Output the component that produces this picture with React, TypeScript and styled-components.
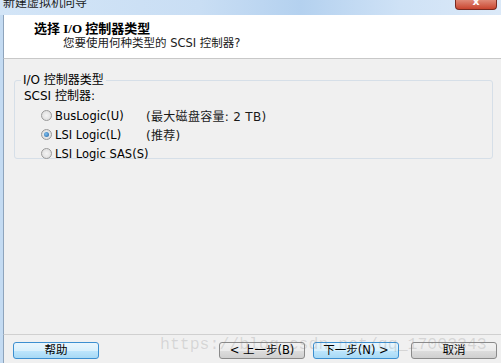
import styled, { createGlobalStyle } from "styled-components";

const GlobalStyle = createGlobalStyle`
   html, body {
      margin: 0;
      padding: 0;
      background: #f0f0f0;
   }
   #root {
      width: 501px;
      height: 363px;
      overflow: hidden;
   }
`

const cjk = `"DejaVu Sans", "Noto Sans CJK SC", sans-serif`

const StyledWindow = styled.div`
   position: relative;
   width: 501px;
   height: 363px;
   display: flex;
   flex-direction: column;
   box-sizing: border-box;
   border-left: 3px solid #c4dbf2;
   font-family: ${cjk};
   font-size: 12px;
   color: #000;
   background: #f0f0f0;
`

const StyledTitleBar = styled.div`
   height: 15px;
   display: flex;
   justify-content: space-between;
   align-items: flex-start;
   margin-left: -3px;
   background: linear-gradient(90deg, #d3e5f7 0%, #c9def4 40%, #b4d1ef 60%, #cfe2f6 80%, #dbe9f8 100%);
   overflow: hidden;
`

const StyledTitleText = styled.span`
   font-size: 12px;
   line-height: 12px;
   margin-top: -3px;
   padding-left: 3px;
   color: #1a1a1a;
`

const StyledClose = styled.div`
   width: 40px;
   height: 9px;
   margin-right: 4px;
   border: 1px solid #7a2a20;
   border-top: none;
   border-radius: 0 0 4px 4px;
   background: linear-gradient(#e08a78, #c9452f);
   color: #fff;
   font-size: 11px;
   line-height: 4px;
   text-align: center;
   font-weight: bold;
`

const StyledHeader = styled.div`
   height: 44px;
   background: #fff;
   border-left: 1px solid #8ea4bc;
   border-bottom: 1px solid #c8c8c8;
   box-sizing: border-box;
   padding: 6px 0 0 30px;
   display: flex;
   flex-direction: column;
`

const StyledHeaderTitle = styled.div`
   font-family: "Liberation Serif", "Noto Sans CJK SC", serif;
   font-weight: bold;
   font-size: 13px;
   line-height: 15px;
`

const StyledHeaderSub = styled.div`
   padding-left: 29px;
   font-size: 11.5px;
   line-height: 14px;
   color: #1a1a1a;
`

const StyledBody = styled.div`
   flex: 1;
   border-left: 1px solid #8ea4bc;
   padding: 15px 8px 0 10px;
`

const StyledGroup = styled.fieldset`
   margin: 0;
   height: 85px;
   box-sizing: border-box;
   border: 1px solid #d6dfe8;
   border-radius: 3px;
   padding: 0 0 0 9px;
`

const StyledLegend = styled.legend`
   padding: 0 2px;
   margin-left: -3px;
   font-size: 12px;
   line-height: 12px;
`

const StyledRowLabel = styled.div`
   height: 19px;
   line-height: 19px;
   margin-top: 1px;
`

const StyledOptions = styled.div`
   padding-left: 17px;
   display: flex;
   flex-direction: column;
`

const StyledOption = styled.label`
   height: 19px;
   display: grid;
   grid-template-columns: 105px auto;
   align-items: center;
   white-space: nowrap;
`

const StyledRadioWrap = styled.span`
   display: flex;
   align-items: center;
   gap: 3px;
   font-size: 11.5px;
`

const StyledRadio = styled.span<{ $checked?: boolean }>`
   flex-shrink: 0;
   width: 9px;
   height: 9px;
   border-radius: 50%;
   border: 1px solid #9a9a9a;
   background: radial-gradient(circle, #f4f4f4, #d8d8d8);
   display: flex;
   align-items: center;
   justify-content: center;
   &::after {
      content: "";
      display: ${(p) => (p.$checked ? "block" : "none")};
      width: 5px;
      height: 5px;
      border-radius: 50%;
      background: radial-gradient(circle at 40% 40%, #7fc0f0, #1f5f9f);
   }
`

const StyledNote = styled.span`
   color: #1a1a1a;
   letter-spacing: 0.3px;
`

const StyledFooter = styled.div`
   height: 29px;
   border-top: 1px solid #d0d0d0;
   border-left: 1px solid #8ea4bc;
   display: flex;
   align-items: flex-start;
   padding: 7px 0 0 9px;
   box-sizing: border-box;
   gap: 8px;
`

const StyledButton = styled.button<{ $focused?: boolean; $gap?: number }>`
   width: 86px;
   height: 17px;
   margin-left: ${(p) => p.$gap ?? 0}px;
   padding: 0;
   border-radius: 3px;
   border: 1px solid ${(p) => (p.$focused ? "#3c8fd0" : "#8a8a8a")};
   background: ${(p) =>
      p.$focused
         ? "linear-gradient(#eaf6fd 0%, #d9f0fc 50%, #bee6fd 51%, #a7d9f5 100%)"
         : "linear-gradient(#f2f2f2 0%, #ebebeb 50%, #dddddd 51%, #cfcfcf 100%)"};
   font-family: ${cjk};
   font-size: 11.5px;
   line-height: 15px;
   color: #000;
`

const StyledWatermark = styled.div`
   position: absolute;
   left: 157px;
   top: 335px;
   font-family: "Liberation Mono", monospace;
   font-size: 16.5px;
   color: rgba(120, 120, 120, 0.22);
   pointer-events: none;
   white-space: nowrap;
`

const App = () => {
   return (
      <>
         <GlobalStyle />
         <StyledWindow>
            <StyledTitleBar>
               <StyledTitleText>新建虚拟机向导</StyledTitleText>
               <StyledClose>x</StyledClose>
            </StyledTitleBar>

            <StyledHeader>
               <StyledHeaderTitle>选择 I/O 控制器类型</StyledHeaderTitle>
               <StyledHeaderSub>您要使用何种类型的 SCSI 控制器?</StyledHeaderSub>
            </StyledHeader>

            <StyledBody>
               <StyledGroup>
                  <StyledLegend>I/O 控制器类型</StyledLegend>
                  <StyledRowLabel>SCSI 控制器:</StyledRowLabel>
                  <StyledOptions>
                     <StyledOption>
                        <StyledRadioWrap><StyledRadio />BusLogic(U)</StyledRadioWrap>
                        <StyledNote>(最大磁盘容量: 2 TB)</StyledNote>
                     </StyledOption>
                     <StyledOption>
                        <StyledRadioWrap><StyledRadio $checked />LSI Logic(L)</StyledRadioWrap>
                        <StyledNote>(推荐)</StyledNote>
                     </StyledOption>
                     <StyledOption>
                        <StyledRadioWrap><StyledRadio />LSI Logic SAS(S)</StyledRadioWrap>
                        <span />
                     </StyledOption>
                  </StyledOptions>
               </StyledGroup>
            </StyledBody>

            <StyledFooter>
               <StyledButton $focused>帮助</StyledButton>
               <StyledButton $gap={112}>&lt; 上一步(B)</StyledButton>
               <StyledButton $focused>下一步(N) &gt;</StyledButton>
               <StyledButton $gap={4}>取消</StyledButton>
            </StyledFooter>

            <StyledWatermark>https://blog.csdn.net/qq_17003343</StyledWatermark>
         </StyledWindow>
      </>
   )
}

export default App;
